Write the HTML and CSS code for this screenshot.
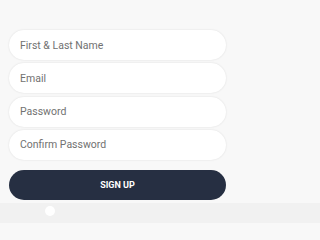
FILE: index.html
```html
<!DOCTYPE html>
<html>
<head>
<meta charset="utf-8">
<link rel="stylesheet" href="styles.css">
</head>
<body>
<div class="form">
  <div class="field">First &amp; Last Name</div>
  <div class="field">Email</div>
  <div class="field">Password</div>
  <div class="field">Confirm Password</div>
  <div class="btn">SIGN UP</div>
</div>
<div class="bottom"><span class="dot"></span></div>
</body>
</html>
```
FILE: styles.css
```css
html, body {
  margin: 0;
  padding: 0;
  background: #f8f8f8;
  font-family: Roboto, "Liberation Sans", sans-serif;
}
body {
  overflow: hidden;
}
.form {
  padding: 30px 0 0 9px;
  display: flex;
  flex-direction: column;
  gap: 3.33px;
}
.field {
  width: 217px;
  height: 30px;
  box-sizing: border-box;
  background: #fff;
  border-radius: 15px;
  box-shadow: 0 0 2px rgba(0,0,0,0.12);
  padding-left: 11px;
  display: flex;
  align-items: center;
  font-size: 10.5px;
  color: #717171;
}
.btn {
  margin-top: 6.67px;
  width: 217px;
  height: 30px;
  border-radius: 15px;
  background: #262f42;
  color: #fff;
  font-weight: 700;
  font-size: 9px;
  display: flex;
  align-items: center;
  justify-content: center;
}
.bottom {
  margin-top: 3px;
  height: 20px;
  background: #f1f1f1;
  position: relative;
}
.dot {
  position: absolute;
  left: 45px;
  top: 3px;
  width: 10px;
  height: 10px;
  border-radius: 50%;
  background: #fff;
}
```
